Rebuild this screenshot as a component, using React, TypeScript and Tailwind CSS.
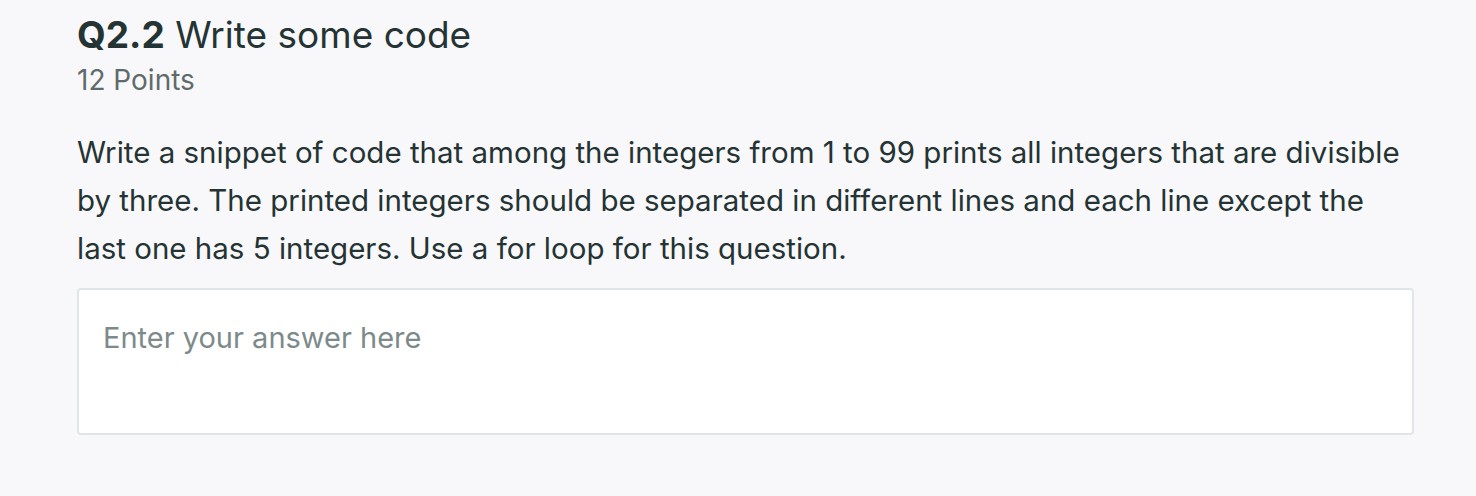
export default function App() {
  return (
    <div
      className="min-h-[496px] w-full bg-[#f8f8fa] pl-[77px] pr-[62px] pt-[12px] text-[#243333]"
      style={{ fontFamily: "Inter, 'Noto Sans', sans-serif" }}
    >
      <h2 className="text-[37px] leading-[46px]">
        <span className="font-bold">Q2.2</span> Write some code
      </h2>
      <div className="mt-[4px] text-[28px] leading-[36px] text-[#5f6b6b]">12 Points</div>
      <p className="mt-[30px] text-[29.5px] leading-[48px]">
        Write a snippet of code that among the integers from 1 to 99 prints all integers that are divisible
        by three. The printed integers should be separated in different lines and each line except the
        last one has 5 integers. Use a for loop for this question.
      </p>
      <textarea
        className="mt-[16px] block h-[147px] w-full resize-none rounded-[4px] border-2 border-[#e2e5e8] bg-white px-[24px] py-[30px] text-[29px] leading-[36px] outline-none placeholder:text-[#7d8a8a]"
        placeholder="Enter your answer here"
      />
    </div>
  );
}
